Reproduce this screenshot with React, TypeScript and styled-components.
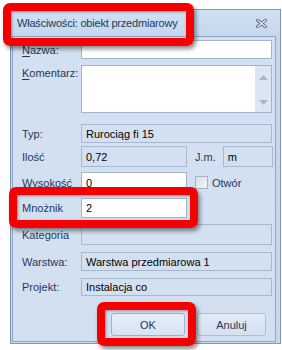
import styled, { createGlobalStyle } from 'styled-components';

const Global = createGlobalStyle`
  html, body {
    margin: 0;
    padding: 0;
    background: #ffffff;
  }
  body {
    font-family: 'Liberation Sans', 'DejaVu Sans', sans-serif;
    font-size: 11px;
  }
`;

const FieldRow = ({ gap, h, label, children, top = false }) => {
  return (
    <Row $gap={gap} $h={h} $top={top}>
      <Label $top={top}>{label}</Label>
      {children}
    </Row>
  );
};

const App = () => {
  return (
    <Page>
      <Global />
      <Window>
        <TitleBar>
          <Title>Właściwości: obiekt przedmiarowy</Title>
          <CloseGlyph width="11" height="9" viewBox="0 0 11 9">
            <path d="M1.5 1.2 L9.5 7.8 M9.5 1.2 L1.5 7.8" stroke="#4e5d73" strokeWidth="3" strokeLinecap="square" />
            <path d="M1.5 1.2 L9.5 7.8 M9.5 1.2 L1.5 7.8" stroke="#f4f6fa" strokeWidth="1.2" strokeLinecap="square" />
          </CloseGlyph>
        </TitleBar>
        <Client>
          <FieldRow gap={0} h={19} label={<><u>N</u>azwa:</>}>
            <Field />
          </FieldRow>
          <FieldRow gap={6} h={48} top label={<><u>K</u>omentarz:</>}>
            <Memo>
              <Scroll>
                <Arrow viewBox="0 0 9 5" width="9" height="5">
                  <path d="M0 5 L4.5 0 L9 5 Z" fill="#a8b6c8" />
                </Arrow>
                <Arrow viewBox="0 0 9 5" width="9" height="5">
                  <path d="M0 0 L9 0 L4.5 5 Z" fill="#a8b6c8" />
                </Arrow>
              </Scroll>
            </Memo>
          </FieldRow>
          <FieldRow gap={11} h={19} label="Typ:">
            <Box>Rurociąg fi 15</Box>
          </FieldRow>
          <FieldRow gap={3} h={21} label="Ilość">
            <Line>
              <Box $w={106}>0,72</Box>
              <Side>J.m.</Side>
              <Box $w={50}>m</Box>
            </Line>
          </FieldRow>
          <FieldRow gap={5} h={21} label="Wysokość">
            <Line>
              <Field $w={106}>0</Field>
              <Check />
              <CheckText>Otwór</CheckText>
            </Line>
          </FieldRow>
          <FieldRow gap={5} h={20} label="Mnożnik">
            <Line>
              <Field $w={106}>2</Field>
            </Line>
          </FieldRow>
          <FieldRow gap={6} h={21} label="Kategoria">
            <Box />
          </FieldRow>
          <FieldRow gap={7} h={19} label="Warstwa:">
            <Box>Warstwa przedmiarowa 1</Box>
          </FieldRow>
          <FieldRow gap={7} h={18} label="Projekt:">
            <Box>Instalacja co</Box>
          </FieldRow>
          <Buttons>
            <Button $w={74} $focus>OK</Button>
            <Button $w={69}>Anuluj</Button>
          </Buttons>
        </Client>
      </Window>
      <Mark style={{ left: 3, top: 3, width: 191, height: 43 }} />
      <Mark style={{ left: 9, top: 187, width: 189, height: 41 }} />
      <Mark style={{ left: 97, top: 302, width: 99, height: 44 }} />
    </Page>
  );
};

export default App;

const Page = styled.div`
  position: relative;
  width: 282px;
  height: 350px;
  overflow: hidden;
  padding-top: 9px;
  padding-left: 10px;
  box-sizing: border-box;
`;

const Window = styled.div`
  width: 271px;
  height: 335px;
  box-sizing: border-box;
  border: 1px solid #8096b6;
  background: linear-gradient(#d2e0f2, #c3d6ee 30px, #c6d8ef);
  display: flex;
  flex-direction: column;
`;

const TitleBar = styled.div`
  height: 26px;
  display: flex;
  align-items: center;
  justify-content: space-between;
  padding: 0 13px 0 6px;
`;

const Title = styled.div`
  color: #1e395b;
  white-space: nowrap;
  letter-spacing: -0.2px;
`;

const CloseGlyph = styled.svg`
  display: block;
  margin-top: 1px;
`;

const Client = styled.div`
  flex: 1;
  margin: 0 4px 1px 1px;
  border: 1px solid #8ea5c4;
  background: #d3e0f1;
  padding: 3px 3px 0 9px;
`;

const Row = styled.div<{ $gap: number; $h: number; $top: boolean }>`
  display: grid;
  grid-template-columns: 59px 1fr;
  align-items: ${(p) => (p.$top ? 'start' : 'center')};
  margin-top: ${(p) => p.$gap}px;
  height: ${(p) => p.$h}px;
`;

const Label = styled.div<{ $top: boolean }>`
  color: #1e395b;
  white-space: nowrap;
  padding-top: ${(p) => (p.$top ? 2 : 0)}px;
  u {
    text-decoration-thickness: 1px;
    text-underline-offset: 2px;
  }
`;

const Line = styled.div`
  display: flex;
  align-items: center;
  height: 100%;
`;

const Field = styled.div<{ $w?: number }>`
  box-sizing: border-box;
  height: 100%;
  width: ${(p) => (p.$w ? `${p.$w}px` : 'auto')};
  background: #ffffff;
  border: 1px solid #a3b5cd;
  color: #000000;
  padding: 0 4px;
  display: flex;
  align-items: center;
`;

const Box = styled(Field)`
  background: #d3e0f1;
  border-color: #a7b8cf;
`;

const Memo = styled(Field)`
  justify-content: flex-end;
  align-items: stretch;
  padding: 0;
`;

const Scroll = styled.div`
  width: 16px;
  background: #dbe6f3;
  display: flex;
  flex-direction: column;
  justify-content: space-between;
  align-items: center;
  padding: 9px 0 7px;
`;

const Arrow = styled.svg`
  display: block;
`;

const Side = styled.div`
  color: #1e395b;
  margin: 0 7px 0 8px;
`;

const Check = styled.div`
  width: 13px;
  height: 13px;
  box-sizing: border-box;
  margin-left: 8px;
  border: 1px solid #a4b3c6;
  background: linear-gradient(135deg, #d9dfe6, #f2f4f7);
`;

const CheckText = styled.div`
  color: #1e395b;
  margin-left: 4px;
`;

const Buttons = styled.div`
  display: flex;
  justify-content: flex-end;
  gap: 12px;
  margin-top: 17px;
  padding-right: 6px;
`;

const Button = styled.div<{ $w: number; $focus?: boolean }>`
  width: ${(p) => p.$w}px;
  height: 23px;
  box-sizing: border-box;
  border: 1px solid ${(p) => (p.$focus ? '#9cb2cf' : '#aebfd5')};
  border-radius: 3px;
  background: ${(p) =>
    p.$focus ? 'linear-gradient(#e6eef9, #d6e3f3)' : 'linear-gradient(#e2ebf6, #d4e1f1)'};
  color: #1e395b;
  display: flex;
  align-items: center;
  justify-content: center;
`;

const Mark = styled.div`
  position: absolute;
  box-sizing: border-box;
  border: 8px solid #f50000;
  border-radius: 7px;
  box-shadow: 2px 3px 4px rgba(0, 0, 0, 0.45), inset 1px 1px 3px rgba(0, 0, 0, 0.35);
`;
